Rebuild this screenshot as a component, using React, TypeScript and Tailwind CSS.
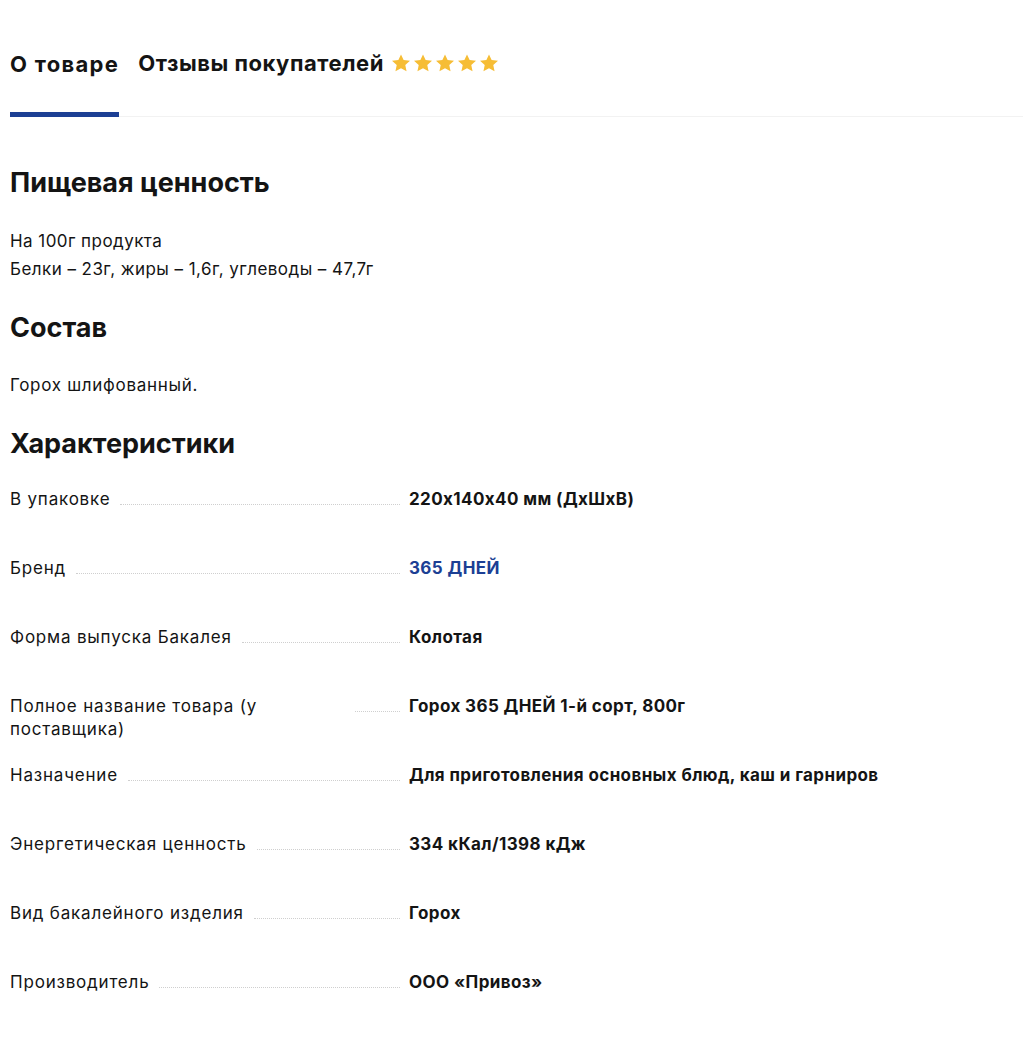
import React from "react";

const rows: { label: string; value: string; brand?: boolean }[] = [
  { label: "В упаковке", value: "220x140x40 мм (ДхШхВ)" },
  { label: "Бренд", value: "365 ДНЕЙ", brand: true },
  { label: "Форма выпуска Бакалея", value: "Колотая" },
  { label: "Полное название товара (у поставщика)", value: "Горох 365 ДНЕЙ 1-й сорт, 800г" },
  { label: "Назначение", value: "Для приготовления основных блюд, каш и гарниров" },
  { label: "Энергетическая ценность", value: "334 кКал/1398 кДж" },
  { label: "Вид бакалейного изделия", value: "Горох" },
  { label: "Производитель", value: "ООО «Привоз»" },
];

function Star() {
  return (
    <svg width="18" height="18" viewBox="0 0 24 23" className="shrink-0">
      <path
        d="M12 0l3.5 7.4 8.5 1-6.3 5.8 1.7 8.4L12 18.4l-7.4 4.2 1.7-8.4L0 8.4l8.5-1z"
        fill="#f6bd35"
      />
    </svg>
  );
}

export default function App() {
  return (
    <div
      className="min-h-screen bg-white pl-[10px] text-[#141414] [font-feature-settings:'calt'_0]"
      style={{ fontFamily: "Inter, 'Noto Sans', sans-serif" }}
    >
      {/* tabs */}
      <div className="flex items-end border-b border-[#f2f2f2] pt-[49px]">
        <div className="-mb-px border-b-[5px] border-[#1c3f94] pb-[34px] text-[22px] leading-[28px] font-bold tracking-[1.3px]">
          О товаре
        </div>
        <div className="ml-[19px] flex items-center pb-[39px] text-[22px] leading-[28px] font-bold tracking-[0.55px]">
          Отзывы покупателей
          <div className="ml-[8px] flex gap-[4px]">
            <Star />
            <Star />
            <Star />
            <Star />
            <Star />
          </div>
        </div>
      </div>

      <h2 className="mt-[50px] text-[27px] leading-[32px] font-bold">Пищевая ценность</h2>
      <div className="mt-[28px] text-[17px] leading-[28px] tracking-[0.45px]">
        <p>На 100г продукта</p>
        <p>Белки – 23г, жиры – 1,6г, углеводы – 47,7г</p>
      </div>

      <h2 className="mt-[29px] text-[27px] leading-[32px] font-bold">Состав</h2>
      <p className="mt-[27px] text-[17px] leading-[28px] tracking-[0.7px]">Горох шлифованный.</p>

      <h2 className="mt-[29px] text-[27px] leading-[32px] font-bold">Характеристики</h2>
      <div className="mt-[28px]">
        {rows.map((r) => (
          <div key={r.label} className="flex min-h-[69px] items-start text-[17px] leading-[23px]">
            <div className="flex w-[390px] items-start">
              <span className="shrink pr-[10px] tracking-[0.8px]">{r.label}</span>
              <span className="mt-[16px] min-w-[45px] flex-1 border-b border-dotted border-[#cfcfcf]" />
            </div>
            <div
              className={
                "ml-[9px] font-bold tracking-[0.4px] " + (r.brand ? "text-[#1c3f94]" : "")
              }
            >
              {r.value}
            </div>
          </div>
        ))}
      </div>
    </div>
  );
}
